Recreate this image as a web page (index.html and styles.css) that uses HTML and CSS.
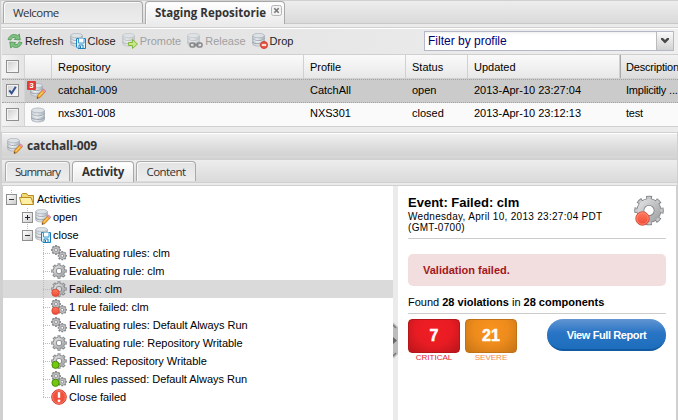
FILE: index.html
```html
<!DOCTYPE html>
<html lang="en">
<head>
<meta charset="utf-8">
<title>Staging Repositories</title>
<link rel="stylesheet" href="styles.css">
</head>
<body>
<svg class="defs" width="0" height="0" aria-hidden="true">
  <defs>
    <linearGradient id="gDb" x1="0" x2="1" y1="0" y2="0"><stop offset="0" stop-color="#c5cbd2"/><stop offset=".4" stop-color="#e4e8ec"/><stop offset="1" stop-color="#aab2bb"/></linearGradient>
    <linearGradient id="gGear" x1="0" x2="1" y1="0" y2="1"><stop offset="0" stop-color="#dcddde"/><stop offset="1" stop-color="#a4a6a9"/></linearGradient>
    <linearGradient id="gRed" x1="0" x2="0" y1="0" y2="1"><stop offset="0" stop-color="#ff7a5e"/><stop offset="1" stop-color="#ee4a34"/></linearGradient>
    <symbol id="db" viewBox="0 0 16 16">
      <path d="M1.500 3.500v9c0 1.400 2.900 2.500 6.500 2.500s6.500-1.100 6.500-2.500v-9z" fill="url(#gDb)" stroke="#a3abb4" stroke-width=".8"/>
      <ellipse cx="8" cy="3.400" rx="6.500" ry="2.400" fill="#dde2e7" stroke="#a9b1b9" stroke-width=".8"/>
      <path d="M1.500 6.600c0 1.400 2.900 2.400 6.500 2.400s6.500-1 6.500-2.400M1.500 10c0 1.400 2.900 2.400 6.500 2.400s6.500-1 6.500-2.400" fill="none" stroke="#8f98a2" stroke-width=".9"/>
      <path d="M2 7.700c.6 1.200 3 2.200 6 2.200s5.400-1 6-2.200" fill="none" stroke="#fff" stroke-width=".6"/>
    </symbol>
    <symbol id="dbs" viewBox="0 0 16 16"><use href="#db" x="-.7" y="-.5" width="14.500" height="14.500"/></symbol>
    <symbol id="refresh" viewBox="0 0 16 16">
      <path d="M1 6.500C2 3 5.200 1 8.500 1.600l2.200.9 1.600-1.500.9 6-6-.6 1.700-1.700C6.500 3.700 4.600 4.800 4 7z" fill="#7fc182" stroke="#4b9451" stroke-width=".8"/>
      <path d="M15 9.500C14 13 10.800 15 7.500 14.400l-2.200-.9L3.700 15l-.9-6 6 .6-1.700 1.700c2.400 1 4.300-.1 4.900-2.300z" fill="#7fc182" stroke="#4b9451" stroke-width=".8"/>
    </symbol>
    <symbol id="dbsave" viewBox="0 0 16 16"><use href="#dbs"/>
      <path d="M6.500 5.500h9v10h-7.500l-1.500-1.500z" fill="#dff2fc" stroke="#1c80bd"/><path d="M8.500 5.500v4.500h5.500v-4.500" fill="#fff" stroke="#3b9ad0"/><path d="M9 15v-3h4v3" fill="#fff" stroke="#1c80bd"/><path d="M10.500 13v2" stroke="#1c80bd"/></symbol>
    <symbol id="dbgo" viewBox="0 0 16 16"><g opacity=".6"><use href="#dbs"/></g>
      <path d="M6.500 9.500h4v-3l5 4.500-5 4.500v-3h-4z" fill="#c8e886" stroke="#82b83c"/></symbol>
    <symbol id="dblink" viewBox="0 0 16 16"><g opacity=".6"><use href="#dbs"/></g>
      <g fill="none" stroke="#858585" stroke-width="1.500"><rect x="3" y="10" width="5" height="4" rx="1.500"/><rect x="10" y="10" width="5" height="4" rx="1.500"/><path d="M6.500 12h5"/></g></symbol>
    <symbol id="dbdrop" viewBox="0 0 16 16"><use href="#dbs"/>
      <circle cx="12" cy="12" r="3.500" fill="#e85b45" stroke="#cf3f2e"/><path d="M9.800 12h4.400" stroke="#fff" stroke-width="1.600"/></symbol>
    <symbol id="dbedit" viewBox="0 0 16 16"><use href="#dbs"/>
      <path d="M7 15.500l.7-3.300 5.300-5.700 2.300 2.200-5.300 5.800z" fill="#f7a934" stroke="#b97116" stroke-width=".7"/><path d="M12.300 7.200l1.300-1.400 2.200 2.200-1.300 1.400z" fill="#e99bac" stroke="#bc6980" stroke-width=".5"/><path d="M7 15.500l.3-1.600 1.300 1.200z" fill="#333"/><path d="M8.900 13l4-4.200" stroke="#ffe18f" stroke-width=".8"/></symbol>
    <symbol id="gear" viewBox="0 0 16 16">
      <g fill="none"><circle cx="8" cy="8" r="6" stroke="#85878a" stroke-width="3.600" pathLength="32" stroke-dasharray="2.400 1.600" transform="rotate(-13 8 8)"/>
      <circle cx="8" cy="8" r="4.200" stroke="#85878a" stroke-width="4"/>
      <circle cx="8" cy="8" r="5.800" stroke="#c4c6c8" stroke-width="2" pathLength="32" stroke-dasharray="1.200 2.800" transform="rotate(-7 8 8)"/>
      <circle cx="8" cy="8" r="4.200" stroke="url(#gGear)" stroke-width="2.400"/></g>
    </symbol>
    <symbol id="minigear" viewBox="0 0 16 16">
      <g fill="none"><circle cx="8" cy="8" r="6" stroke="#85878a" stroke-width="4" pathLength="32" stroke-dasharray="2.400 1.600" transform="rotate(-13 8 8)"/>
      <circle cx="8" cy="8" r="4" stroke="#85878a" stroke-width="4.800"/><circle cx="8" cy="8" r="4.100" stroke="#bcbec0" stroke-width="2.600"/></g>
    </symbol>
    <symbol id="gears" viewBox="0 0 16 16"><use href="#minigear" width="10" height="10"/><use href="#minigear" x="6.500" y="6" width="9.500" height="9.500"/></symbol>
    <symbol id="bad" viewBox="0 0 16 16"><circle cx="4.500" cy="11.800" r="3.700" fill="url(#gRed)" stroke="#cf4634" stroke-width=".8"/></symbol>
    <symbol id="good" viewBox="0 0 16 16"><circle cx="4.500" cy="11.800" r="3.600" fill="#74c80c" stroke="#438606" stroke-width=".9"/></symbol>
    <symbol id="gearbad" viewBox="0 0 16 16"><use href="#gear"/><use href="#bad"/></symbol>
    <symbol id="geargood" viewBox="0 0 16 16"><use href="#gear"/><use href="#good"/></symbol>
    <symbol id="gearsbad" viewBox="0 0 16 16"><use href="#gears"/><use href="#bad"/></symbol>
    <symbol id="gearsgood" viewBox="0 0 16 16"><use href="#gears"/><use href="#good"/></symbol>
    <symbol id="folder" viewBox="0 0 16 16"><path d="M2.500 13.500v-10l1-1h4l1.500 2h5.500v9z" fill="#f4d878" stroke="#b98d22"/><path d="M2.500 13.500L.5 6.500h11.500l2.500 7z" fill="#fdf0a4" stroke="#b98d22"/></symbol>
    <symbol id="error" viewBox="0 0 16 16"><circle cx="8" cy="8" r="7.300" fill="#f0503c" stroke="#d63b2b"/><circle cx="8" cy="8" r="6.400" fill="none" stroke="#f79484" stroke-width=".7"/><path d="M8 3.200v5.600" stroke="#fff" stroke-width="2.400"/><circle cx="8" cy="11.800" r="1.400" fill="#fff"/></symbol>
  </defs>
</svg>

<div class="app">
  <nav class="tabs main-tabs">
    <div class="tab welcome"><span>Welcome</span></div>
    <div class="tab staging active"><span>Staging Repositorie</span><svg class="close" viewBox="0 0 11 11"><rect x=".5" y=".5" width="10" height="10" rx="2" fill="#f3f3f3" stroke="#b5b5b5"/><path d="M3.300 3.300l4.400 4.400M7.700 3.300l-4.400 4.400" stroke="#777" stroke-width="1.600"/></svg></div>
  </nav>

  <div class="toolbar">
    <div class="tool"><svg><use href="#refresh"/></svg>Refresh</div>
    <div class="tool"><svg><use href="#dbsave"/></svg>Close</div>
    <div class="tool off"><svg><use href="#dbgo"/></svg>Promote</div>
    <div class="tool off"><svg><use href="#dblink"/></svg>Release</div>
    <div class="tool"><svg><use href="#dbdrop"/></svg>Drop</div>
    <div class="combo"><span>Filter by profile</span><i class="trigger"><svg viewBox="0 0 8 6"><path d="M0 0h2l2 2 2-2h2v1.500l-4 4-4-4z" fill="#484848"/></svg></i></div>
  </div>

  <div class="grid">
    <div class="row head"><div class="cell box"><i class="check"></i></div><div class="cell"></div><div class="cell">Repository</div><div class="cell">Profile</div><div class="cell">Status</div><div class="cell">Updated</div><div class="cell last">Description</div></div>
    <div class="row selected"><div class="cell box"><i class="check"><svg viewBox="0 0 9 9"><path d="M1.300 4.300l2.300 3L7.800 .8" fill="none" stroke="#344f8e" stroke-width="2"/></svg></i></div><div class="cell icon"><svg><use href="#dbedit"/></svg><b class="badge">3</b></div><div class="cell">catchall-009</div><div class="cell">CatchAll</div><div class="cell">open</div><div class="cell">2013-Apr-10 23:27:04</div><div class="cell last">Implicitly ...</div></div>
    <div class="row"><div class="cell box"><i class="check"></i></div><div class="cell icon"><svg><use href="#db"/></svg></div><div class="cell">nxs301-008</div><div class="cell">NXS301</div><div class="cell">closed</div><div class="cell">2013-Apr-10 23:12:13</div><div class="cell last">test</div></div>
  </div>

  <div class="gap"></div>

  <section class="detail">
    <header class="title"><svg><use href="#dbedit"/></svg><span>catchall-009</span></header>
    <nav class="tabs sub-tabs">
      <div class="tab summary"><span>Summary</span></div>
      <div class="tab activity active"><span>Activity</span></div>
      <div class="tab content"><span>Content</span></div>
    </nav>
    <div class="body">
      <div class="tree">
        <div class="node"><i class="fold minus"></i><svg><use href="#folder"/></svg>Activities</div>
        <div class="node l1"><i class="fold plus"></i><svg><use href="#dbedit"/></svg>open</div>
        <div class="node l1"><i class="fold minus"></i><svg><use href="#dbsave"/></svg>close</div>
        <div class="node l2"><i class="elbow"></i><svg><use href="#gears"/></svg>Evaluating rules: clm</div>
        <div class="node l2"><i class="elbow"></i><svg><use href="#gear"/></svg>Evaluating rule: clm</div>
        <div class="node l2 picked"><i class="elbow"></i><svg><use href="#gearbad"/></svg>Failed: clm</div>
        <div class="node l2"><i class="elbow"></i><svg><use href="#gearsbad"/></svg>1 rule failed: clm</div>
        <div class="node l2"><i class="elbow"></i><svg><use href="#gears"/></svg>Evaluating rules: Default Always Run</div>
        <div class="node l2"><i class="elbow"></i><svg><use href="#gear"/></svg>Evaluating rule: Repository Writable</div>
        <div class="node l2"><i class="elbow"></i><svg><use href="#geargood"/></svg>Passed: Repository Writable</div>
        <div class="node l2"><i class="elbow"></i><svg><use href="#gearsgood"/></svg>All rules passed: Default Always Run</div>
        <div class="node l2"><i class="elbow end"></i><svg><use href="#error"/></svg>Close failed</div>
      </div>
      <div class="splitter"><svg viewBox="0 0 5 35"><path d="M0 0h1l4 4v27l-4 4h-1z" fill="#bdbdbd"/><path d="M0 2l3 3M0 33l3-3" stroke="#777" stroke-width="1.500"/><path d="M0 14l4 3.500-4 3.500z" fill="#666"/></svg></div>
      <div class="event">
        <div class="event-head">
          <div><h1>Event: Failed: clm</h1><p>Wednesday, April 10, 2013 23:27:04 PDT (GMT-0700)</p></div>
          <svg viewBox="0 0 32 32">
            <g fill="none"><circle cx="16" cy="15.500" r="12" stroke="#7b7d80" stroke-width="5.500" pathLength="32" stroke-dasharray="2.200 1.800" transform="rotate(-12 16 15.500)"/><circle cx="16" cy="15.500" r="8.500" stroke="#7b7d80" stroke-width="7.500"/><circle cx="16" cy="15.500" r="12" stroke="#c6c8ca" stroke-width="3.800" pathLength="32" stroke-dasharray="1.600 2.400" transform="rotate(-9 16 15.500)"/><circle cx="16" cy="15.500" r="8.500" stroke="url(#gGear)" stroke-width="6"/></g>
            <circle cx="9.500" cy="23.500" r="6.700" fill="url(#gRed)" stroke="#d24b39"/><circle cx="9.500" cy="23.500" r="5.700" fill="none" stroke="#ff9c86" stroke-width=".7"/>
          </svg>
        </div>
        <div class="alert">Validation failed.</div>
        <div class="found">Found <b>28 violations</b> in <b>28 components</b></div>
        <div class="result">
          <div class="score critical"><b>7</b><span>CRITICAL</span></div>
          <div class="score severe"><b>21</b><span>SEVERE</span></div>
          <a class="report">View Full Report</a>
        </div>
      </div>
    </div>
  </section>
</div>
</body>
</html>
```
FILE: styles.css
```css
* { box-sizing: border-box; }
body { margin: 0; background: #ebebeb; font: 11px/14px "Liberation Sans", Arial, sans-serif; color: #000; overflow: hidden; }
svg { display: block; flex: none; }
i { font-style: normal; }
.defs { position: absolute; }
.app { width: 678px; height: 420px; display: flex; flex-direction: column; border-left: 1px solid #d0d0d0; overflow: hidden; }

.tabs { display: flex; align-items: flex-end; font-family: "Open Sans", "Noto Sans", sans-serif; font-size: 11.5px; color: #333; flex: none; }
.main-tabs { height: 28px; border-top: 1px solid #d0d0d0; border-bottom: 1px solid #d0d0d0; padding: 0 0 3px 2px; gap: 2px; background: linear-gradient(#ededed, #dadada 22px, #c8c8c8 22px, #c8c8c8 23px, #ebebeb 23px); }
.tab { display: flex; align-items: center; border: 1px solid #a9a9a9; border-bottom: 0; border-radius: 4px 4px 0 0; background: linear-gradient(#e3e3e3, #ededed); box-shadow: inset 1px 1px #fafafa; white-space: nowrap; }
.tab.active { font-weight: bold; background: linear-gradient(#fff, #ebebeb); }
.main-tabs .tab { height: 22px; margin-bottom: 1px; padding-left: 9px; }
.main-tabs .active { height: 23px; margin-bottom: 0; }
.welcome { width: 140px; letter-spacing: -.55px; }
.staging { width: 140px; position: relative; }
.close { position: absolute; width: 11px; height: 11px; right: 2px; top: 3px; }

.toolbar { height: 27px; flex: none; display: flex; align-items: center; padding: 0 4px 1px 5px; margin-left: 1px; gap: 6px; border-top: 1px solid #fff; border-bottom: 1px solid #d0d0d0; background: linear-gradient(90deg, #e0e0e0, #efefef); color: #222; }
.tool { display: flex; align-items: center; gap: 2px; white-space: nowrap; }
.tool svg, .title svg, .node svg, .icon svg { width: 16px; height: 16px; }
.off { color: #a0a0a0; }
.combo { margin-left: auto; width: 250px; height: 20px; display: flex; align-items: center; border: 1px solid #b5b8c8; background: linear-gradient(#f0f0f0, #fff 3px); padding-left: 3px; font-size: 12px; color: #000074; }
.trigger { margin-left: auto; width: 17px; height: 18px; display: grid; place-items: center; border-left: 1px solid #bbb; background: linear-gradient(#fafafa, #d2d2d2); }
.trigger svg { width: 8px; height: 6px; }

.grid { margin-left: 1px; flex: none; border-bottom: 1px solid #d0d0d0; }
.row { display: grid; grid-template-columns: 23px 27px 252px 102px 62px 152px 1fr; height: 23px; background: #fafafa; }
.cell { display: flex; align-items: center; padding: 0 0 3px 6px; white-space: nowrap; min-width: 0; }
.head { height: 24px; background: linear-gradient(#fafafa, #e8e8e8); border-bottom: 1px solid #d0d0d0; }
.head .cell { border-right: 1px solid #d0d0d0; padding-bottom: 0; }
.head .last { border-left: 1px solid #aaa; border-right: 0; padding-left: 5px; background: linear-gradient(#f2f2f2, #dcdcdc); letter-spacing: -.2px; }
.row .box { padding: 0 0 0 4px; border-right: 1px solid #d4d4d4; background: linear-gradient(90deg, #f3f3f3, #e5e5e5); }
.row .last { letter-spacing: -.2px; }
.selected { height: 24px; background: #cbcbcb; border: 1px dotted #a3a3a3; border-left: 0; border-right: 0; }
.selected .box { background: #dcdcdc; padding-bottom: 2px; }
.check { width: 13px; height: 13px; border: 1px solid #8f8f8f; background: linear-gradient(135deg, #ccc, #fff); box-shadow: inset 0 0 0 1px #f4f4f4; display: grid; place-items: center; }
.check svg { width: 9px; height: 9px; }
.row .icon { position: relative; padding: 0 0 0 5px; }
.badge { position: absolute; left: 2px; top: 1px; width: 9px; height: 9px; border-radius: 1px; background: #e23b36; color: #fff; font-size: 8px; line-height: 9px; text-align: center; }

.gap { height: 5px; flex: none; }
.detail { flex: 1; min-height: 0; display: flex; flex-direction: column; border: 1px solid #d0d0d0; border-bottom: 0; }
.title { height: 27px; flex: none; display: flex; align-items: center; gap: 4px; padding-left: 5px; border-top: 1px solid #fff; border-bottom: 2px solid #d0d0d0; background: linear-gradient(#f0f0f0, #dedede 50%, #d4d4d4 85%, #d8d8d8); color: #333; font: bold 12px/14px "Open Sans", sans-serif; letter-spacing: -.15px; }
.sub-tabs { height: 26px; border-bottom: 1px solid #d0d0d0; padding: 0 0 3px 3px; gap: 2px; background: linear-gradient(#ededed, #dadada 22px, #d0d0d0 22px, #d0d0d0 23px, #ebebeb 23px); }
.sub-tabs .tab { height: 20px; margin-bottom: 1px; justify-content: center; }
.sub-tabs .active { height: 21px; margin-bottom: 0; }
.tabs .summary { width: 65px; letter-spacing: -.9px; }
.tabs .activity { width: 62px; letter-spacing: -.25px; }
.tabs .content { width: 60px; letter-spacing: -.55px; }
.body { flex: 1; min-height: 0; display: flex; background: #fff; border-left: 1px solid #d0d0d0; border-right: 1px solid #d0d0d0; }
.tree { width: 390px; padding-top: 4px; }
.node { height: 18px; display: flex; align-items: center; white-space: pre; }
.node svg { margin-right: 2px; }
.l1 { padding-left: 16px; }
.l2 { padding-left: 32px; }
.l2, .picked { letter-spacing: -.03px; }
.picked { background: #dadada; }
.fold { width: 16px; height: 18px; flex: none; display: grid; place-items: center; background: repeating-linear-gradient(#bbb 0 1px, transparent 1px 2px) 8px 0/1px 100% no-repeat; }
.node > .minus { background-size: 1px 6px; }
.fold::before { content: ""; width: 9px; height: 9px; margin-left: 1px; border: 1px solid #909090; background: linear-gradient(#333, #333) center/5px 1px no-repeat, linear-gradient(135deg, #fff, #ccc); }
.plus::before { background: linear-gradient(#224, #224) center/5px 1px no-repeat, linear-gradient(#224, #224) center/1px 5px no-repeat, linear-gradient(135deg, #fff, #ccc); }
.elbow { width: 8px; height: 18px; margin-left: 8px; flex: none; background: repeating-linear-gradient(#bbb 0 1px, transparent 1px 2px) 0 0/1px 100% no-repeat, repeating-linear-gradient(90deg, #bbb 0 1px, transparent 1px 2px) 0 9px/8px 1px no-repeat; }
.end { background-size: 1px 10px, 8px 1px; }
.splitter { width: 5px; background: #ebebeb; display: flex; padding-top: 137px; }
.splitter svg { width: 5px; height: 35px; }
.event { flex: 1; padding: 9px 10px 0; }
.event-head { height: 44px; display: flex; justify-content: space-between; border-bottom: 1px solid #ccc; }
.event-head svg { width: 32px; height: 32px; margin-right: 1px; }
h1 { margin: 0 0 1px; font-size: 13px; line-height: 15px; }
.event-head p { margin: 0; width: 205px; font-size: 10px; line-height: 11px; letter-spacing: .3px; }
.alert { height: 32px; margin-top: 15px; padding-left: 15px; line-height: 32px; border-radius: 5px; background: #f2dede; color: #a31621; font-weight: bold; }
.found { margin-top: 9px; height: 19px; border-bottom: 1px solid #ccc; }
.result { display: flex; gap: 5px; margin-top: 5px; }
.score { width: 52px; display: flex; flex-direction: column; align-items: center; font-size: 8px; line-height: 9px; }
.score b { width: 52px; height: 34px; border-radius: 4px; text-align: center; font-size: 16px; line-height: 31px; color: #fff; -webkit-text-stroke: .5px #fff; }
.critical { color: #e52330; }
.critical b { background: radial-gradient(ellipse at 50% 30%, #f01d24, #e91c23 50%, #b8151b); border: 1px solid #b4161b; }
.severe { color: #f5894a; }
.severe b { background: radial-gradient(ellipse at 50% 30%, #f9931e, #ed8b1c 50%, #c57416); border: 1px solid #c07218; }
.report { margin-left: auto; width: 119px; height: 32px; border-radius: 16px; background: linear-gradient(#6295d2, #2a75c5 45%, #1d6dbd); border-bottom: 2px solid #1159a1; color: #fff; font-weight: bold; line-height: 32px; text-align: center; letter-spacing: -.4px; }
```
